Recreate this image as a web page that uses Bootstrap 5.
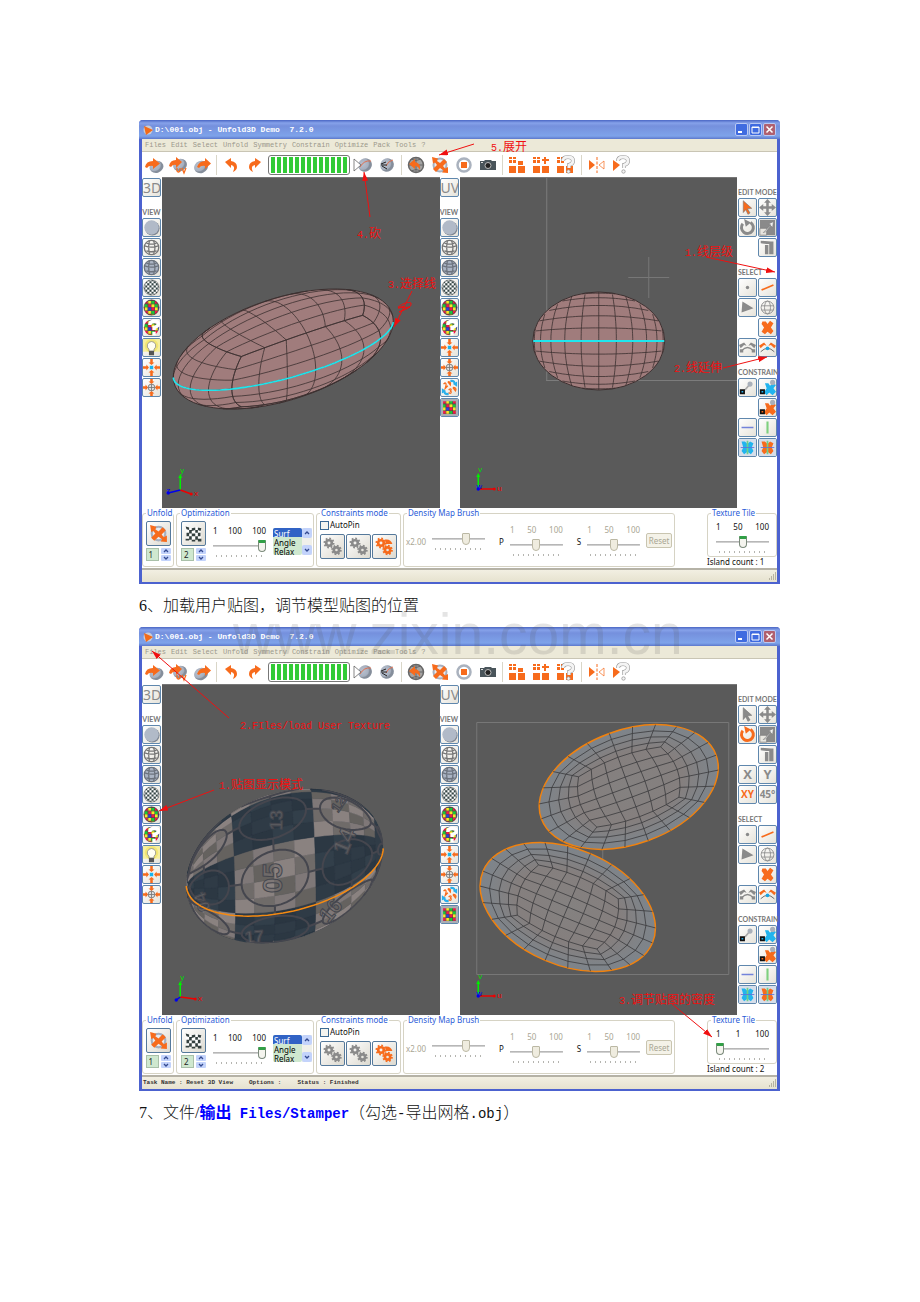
<!DOCTYPE html>
<html lang="zh-CN">
<head>
<meta charset="utf-8">
<meta name="viewport" content="width=device-width, initial-scale=1">
<title>Unfold3D 教程</title>
<link href="https://cdn.jsdelivr.net/npm/bootstrap@5.3.0/dist/css/bootstrap.min.css" rel="stylesheet">
<style>
  :root { --hot:#f76b1c; --mute:#8a8a8a; --face:#ece9d8; --frame:#4c62cf; }
  body { background:#fff; color:#111; font-family:"Noto Sans", sans-serif; }
  .doc-page { padding:120px 140px 170px 139px; }
  .doc-line { font:300 16px/44px "Liberation Serif", "Noto Sans CJK SC", sans-serif; height:43px; margin:0; white-space:nowrap; }
  .latin { font-family:"Liberation Mono", monospace; font-size:14px; line-height:16px; }
  .doc-line a { color:#00f; font-weight:700; text-decoration:none; }
  .watermark { position:absolute; z-index:5; left:94px; top:17px; font:400 57px/66px "Liberation Sans", sans-serif; color:rgba(90,90,90,.16); pointer-events:none; }

  .app-window { border:solid var(--frame); border-width:0 3px 2px; border-radius:4px 4px 0 0; background:#fff; font-size:8px; line-height:10px; color:#111; }
  .title-bar { height:19px; margin:0 -3px; padding:0 4px 0 4px; gap:2px; border-radius:4px 4px 0 0; color:#fff;
    background:linear-gradient(#4a66c4 0,#86a2ea 3px,#7590dd 6px,#7ea3ea 16px,#5c78cc 19px); font:700 8px/19px "Liberation Mono", monospace; white-space:pre; }
  .win-btn { width:13px; height:13px; border:1px solid #b9c9f4; border-radius:2px; background:#3f6be0; }
  .win-btn.is-close { background:#b0606f; }
  .win-btn svg, .tool-btn svg, .bar-btn svg, .big-btn svg { display:block; width:100%; height:100%; }
  .menu-row { height:13px; padding-left:3px; gap:5px; background:var(--face); border-bottom:1px solid #c9c5b4; font:400 7px/12px "Liberation Mono", monospace; }
  .menu-row a { color:#9b988b; text-decoration:none; }
  .tool-row { height:25px; }
  .bar-btn { width:24px; height:22px; padding:1px 2px; border:0; background:none; color:var(--hot); }
  .bar-sep { width:1px; height:20px; margin:0 2px; background:#d9d6c8; }
  .bar-sep.wide { margin:0 3px 0 4px; }
  .cut-meter { width:82px; height:20px; margin:0 1px; padding:1px; border:1px solid #777; border-radius:3px; background:#fff; }
  .cut-meter .progress-bar { background:repeating-linear-gradient(90deg,#fff 0,#fff 1px,#2ecc34 1px,#35c938 5px,#fff 5px,#fff 6px); }

  .work-area { height:331px; }
  .side-tools { width:20px; gap:1px; padding:1px 1px 0 0; }
  .edit-tools { width:40px; gap:1px; padding:1px 0 0 1px; display:grid; grid-template-columns:19px 19px; grid-auto-rows:19px; }
  .edit-tools .group-name { grid-column:1 / 3; }
  .edit-tools .second { grid-column:2; }
  .group-name { height:19px; padding-top:9px; font:700 7px/10px Lato, sans-serif; color:#777; white-space:nowrap; }
  .tool-btn { width:19px; height:19px; padding:0; border:1px solid #5f87ad; border-radius:2px; color:var(--mute);
    background:linear-gradient(135deg,#fff,#e6e3da); font:700 13px/17px "Open Sans", sans-serif; overflow:hidden; text-align:center; display:block; flex:none; }
  .tool-btn.thin-text { font:400 14px/17px "Noto Sans", sans-serif; }
  .tool-btn.small-text { font-size:10px; }
  .viewport { flex:1 1 0; min-width:0; background:#5a5a5a; overflow:hidden; border-top:1px solid #777; }
  .viewport svg { display:block; width:100%; height:330px; }

  .panel-row { height:60px; gap:2px; white-space:nowrap; }
  .group-box { height:59px; border:1px solid #d6d3c4; border-radius:3px; flex:none; }
  .group-box > legend { float:none; width:auto; margin:0 0 0 3px; padding:0 1px; font-size:8px; line-height:10px; color:#2a5bd7; }
  .w-unfold { width:32px; } .w-optim { width:138px; } .w-cons { width:85px; } .w-density { width:272px; } .w-tile { width:70px; }
  .w-tile .group-box { height:49px; }
  .big-btn { width:25px; height:25px; padding:1px; border:1px solid #55799b; border-radius:2px; background:linear-gradient(135deg,#fff,#dcd9cf); color:var(--mute); }
  .tool-btn.hot, .big-btn.hot { color:var(--hot); }
  .tool-btn.cold { color:#22b4ee; }
  .spin-row { gap:2px; }
  .spin-input { width:13px; height:13px; padding:0 0 0 2px; border:1px solid #a9c0a9; background:#cfe8cf; font-size:8px; line-height:11px; color:#222; }
  .spin-btns { gap:1px; }
  .spin-btns button { width:10px; height:6px; padding:0; border:0; border-radius:1px; background:#c3d3fb; display:block; }
  .spin-btns svg { display:block; width:10px; height:6px; }
  .scale-box { width:53px; }
  .scale-nums { height:10px; }
  .scale-box input { appearance:none; -webkit-appearance:none; display:block; width:100%; height:12px; margin:4px 0 0; background:linear-gradient(#aaa,#ddd) center/100% 2px no-repeat; }
  .scale-box input::-webkit-slider-thumb { appearance:none; -webkit-appearance:none; width:8px; height:12px; border:1px solid #7b8a7b; border-top:3px solid #31a046; border-radius:1px 1px 4px 4px; background:#f4f4ee; }
  .scale-box input:disabled::-webkit-slider-thumb { border:1px solid #bbb8a4; background:#efecdf; }
  .scale-box .ticks { height:2px; margin:3px 2px 0 3px; background:repeating-linear-gradient(90deg,#b5b5b0 0,#b5b5b0 1px,transparent 1px,transparent 5px); }
  .dim { color:#a9a694; }
  .optim-row { gap:7px; }
  .stack { gap:2px; padding-top:3px; }
  .density-row { gap:6px; padding:7px 2px 0; }
  .density-row > .beside { margin-top:12px; }
  .mode-box { padding-top:10px; }
  .mode-list { width:29px; height:27px; padding:0; border:0; background:#cfe8cf; font:400 8px/9px "Noto Sans", sans-serif; overflow:hidden; }
  .mode-list option { padding:0 1px; height:9px; min-height:0; line-height:9px; }
  .mode-list option:checked { background:linear-gradient(#3163c5,#3163c5); -webkit-text-fill-color:#fff; }
  .list-scroll { width:10px; background:#f0f0ea; }
  .list-scroll button { width:10px; height:10px; padding:0; border:0; border-radius:2px; background:#c3d3fb; }
  .list-scroll svg { display:block; width:10px; height:10px; }
  .pin-check { width:9px; height:9px; margin:0 1px 0 0; border:1px solid #3c6a94; border-radius:0; appearance:none; -webkit-appearance:none; background:#f5f5f0; }
  .pin-row { padding:2px 0 0 3px; }
  .reset-btn { width:26px; height:15px; padding:0; border:1px solid #c9c5b0; border-radius:2px; background:#f4f2e8; color:#a9a694; font-size:8px; line-height:12px; }
  .status-row { height:14px; border-top:2px solid #b5b2a6; background:linear-gradient(#f2efe2,#e6e2cf); font:700 6px/12px "Liberation Mono", monospace; color:#333; padding-left:1px; gap:16px; }
  .notes { position:absolute; left:-3px; top:0; width:calc(100% + 6px); height:calc(100% + 2px); pointer-events:none; overflow:visible; z-index:2; }
  .notes text { fill:#f01010; font:400 12px "Liberation Mono", "Noto Sans CJK SC", sans-serif; }
  .notes .num { font-size:10px; }
  .notes path { stroke:#f01010; stroke-width:1; fill:none; }
  .paint-box { position:absolute; width:0; height:0; }
</style>
</head>
<body>
<svg class="paint-box" aria-hidden="true">
  <defs>
    <radialGradient id="steel" cx=".4" cy=".35"><stop offset="0" stop-color="#b9c1cf"/><stop offset=".8" stop-color="#a7b0bf"/><stop offset="1" stop-color="#858e9b"/></radialGradient>
    <radialGradient id="clay"><stop offset="0" stop-color="#848180"/><stop offset=".6" stop-color="#857f7e"/><stop offset=".85" stop-color="#808387"/><stop offset="1" stop-color="#7d848b"/></radialGradient>
    <pattern id="chk" width="5" height="5" patternUnits="userSpaceOnUse"><path fill="#fff" d="M0 0h5v5H0z"/><path fill="#344" d="M0 0h2.500v2.500H0zM2.500 2.500H5V5H2.500z"/></pattern>
    <pattern id="rgb" width="12" height="12" patternUnits="userSpaceOnUse" x="2" y="2"><path fill="#334" d="M0 0h12v12H0z"/><path fill="#f0174b" d="M0 0h3.500v3.500H0zM4 4h3.500v3.500H4zM8 8h3.500v3.500H8z"/><path fill="#fbea25" d="M4 0h3.500v3.500H4zM8 4h3.500v3.500H8zM0 8h3.500v3.500H0z"/><path fill="#18c838" d="M8 0h3.500v3.500H8zM0 4h3.500v3.500H0z"/><path fill="#2840e0" d="M4 8h3.500v3.500H4z"/></pattern>
    <marker id="tip" viewBox="0 0 9 6" refX="9" refY="3" markerWidth="9" markerHeight="6" markerUnits="userSpaceOnUse" orient="auto"><path d="M0 0L9 3L0 6z" fill="#f01010"/></marker>
  </defs>
  <symbol id="i-load" viewBox="0 0 20 20"><ellipse cx="12.500" cy="12" rx="7" ry="6" fill="url(#steel)" transform="rotate(-20 12 12)"/><path d="M1 12Q2 6 9 6V3l7 5.500L9 14v-3Q5 10 3 13z" fill="currentColor"/></symbol>
  <symbol id="i-loaduv" viewBox="0 0 20 20"><ellipse cx="12" cy="10" rx="7" ry="6" fill="url(#steel)" transform="rotate(-20 12 10)"/><path d="M1 11Q2 5 8 5V2l6 5-6 6v-3Q5 9 3 12z" fill="currentColor"/><path d="M9 13v3q1 2 3 0v-3M14 13l2 5 2-5" fill="none" stroke="currentColor" stroke-width="1.3"/></symbol>
  <symbol id="i-save" viewBox="0 0 20 20"><ellipse cx="9" cy="12" rx="7" ry="6" fill="url(#steel)" transform="rotate(-20 9 12)"/><path d="M5 12Q7 6 13 6V3l6 5.500-6 5.500v-3Q9 10 7 13z" fill="currentColor"/></symbol>
  <symbol id="i-undo" viewBox="0 0 20 20"><path d="M4 7l6-4v3q6 1 6 6 0 3-4 5 3-6-2-7v3z" fill="currentColor"/></symbol>
  <symbol id="i-redo" viewBox="0 0 20 20"><path d="M16 7l-6-4v3q-6 1-6 6 0 3 4 5-3-6 2-7v3z" fill="currentColor"/></symbol>
  <symbol id="i-cut" viewBox="0 0 20 20"><ellipse cx="12" cy="10" rx="7" ry="6.500" fill="url(#steel)" transform="rotate(-30 12 10)"/><path d="M7 12Q11 5 18 6" stroke="#e07050" fill="none"/><path d="M1 4l7 6-7 6z" fill="#fff" stroke="#555" stroke-width=".7"/></symbol>
  <symbol id="i-join" viewBox="0 0 20 20"><ellipse cx="10" cy="10" rx="7" ry="6.500" fill="url(#steel)" transform="rotate(-30 10 10)"/><path d="M9 11Q11 6 16 5" stroke="#e07050" fill="none"/><path d="M4 9l5-2M4 10h6M5 11l5 3" stroke="#222" fill="none"/></symbol>
  <symbol id="i-globeback" viewBox="0 0 20 20"><circle cx="10" cy="10" r="7.500" fill="#a4a4a4" stroke="#666" stroke-width="1.500"/><path d="M10 2v16M2 10h16M5 4q5 3 10 0M5 16q5-3 10 0" stroke="#666" fill="none"/><path d="M3 9l6-5v3q6 1 5 8-2-4-5-4v3z" fill="currentColor"/></symbol>
  <symbol id="i-unfold" viewBox="0 0 20 20"><circle cx="10" cy="10" r="6.500" fill="#e8eaee" stroke="#a7b0bf" stroke-width="2"/><path d="M2 2l6 1.500L7 6l3 2 4-4 3 3-4 4 2 2.500L18 12v6l-6-.5 1.500-2L10 13l-4 4-3-3 4-4-2-2.500-2 1z" fill="currentColor"/></symbol>
  <symbol id="i-record" viewBox="0 0 20 20"><circle cx="10" cy="10" r="6.500" fill="#fff" stroke="#aab2be" stroke-width="2.500"/><path d="M7 7h6v6H7z" fill="currentColor"/></symbol>
  <symbol id="i-camera" viewBox="0 0 20 20"><path d="M2 6h4l1-1h6l1 1h4v9H2z" fill="#4a555b"/><circle cx="10" cy="10.500" r="3" fill="#222" stroke="#bbb"/><path d="M3 7h2v1H3z" fill="#ddd"/></symbol>
  <symbol id="i-pack" viewBox="0 0 20 20"><path d="M2 2h3v2H2zM6 2h3v2H6zM2 5h3v3H2zM6 5h3v3H6zM11 6h5v4h-5zM2 11h7v7H2zM11 11h7v7h-7z" fill="currentColor"/></symbol>
  <symbol id="i-packadd" viewBox="0 0 20 20"><path d="M2 2h3v2H2zM6 2h3v2H6zM2 5h3v3H2zM6 5h3v3H6zM13 2h2v2h3v2h-3v3h-2V6h-2V4h2zM2 11h7v7H2zM11 11h7v7h-7z" fill="currentColor"/></symbol>
  <symbol id="i-packask" viewBox="0 0 20 20"><path d="M2 2h3v2H2zM6 2h3v2H6zM2 5h3v3H2zM6 5h3v3H6zM2 11h7v7H2zM11 11h7v7h-7z" fill="currentColor"/><path d="M8 6q0-4 5-4 5 0 5 4 0 3-4 4v3" stroke="#999" stroke-width="4" fill="none"/><path d="M8 6q0-4 5-4 5 0 5 4 0 3-4 4v3" stroke="#f4f4f4" stroke-width="2.800" fill="none"/><circle cx="13.500" cy="16.500" r="1.700" fill="#f4f4f4" stroke="#999" stroke-width=".8"/></symbol>
  <symbol id="i-mirror" viewBox="0 0 20 20"><path d="M2 5l6 5-6 5z" fill="currentColor"/><path d="M10 2v16" stroke="currentColor" stroke-dasharray="3 1.500"/><path d="M17 6l-5 4 5 4z" fill="none" stroke="currentColor" stroke-width=".7"/></symbol>
  <symbol id="i-mirrorask" viewBox="0 0 20 20"><path d="M2 5l7 5-7 6z" fill="currentColor"/><path d="M7 6q0-4 5-4 5 0 5 4 0 3-4 4v3" stroke="#999" stroke-width="4" fill="none"/><path d="M7 6q0-4 5-4 5 0 5 4 0 3-4 4v3" stroke="#f4f4f4" stroke-width="2.800" fill="none"/><circle cx="12.500" cy="16.500" r="1.700" fill="#f4f4f4" stroke="#999" stroke-width=".8"/></symbol>

  <symbol id="i-ball" viewBox="0 0 20 20"><circle cx="11" cy="11" r="8.500" fill="#7d8591"/><circle cx="10" cy="10" r="8.500" fill="#b1bac8"/></symbol>
  <symbol id="i-wire" viewBox="0 0 20 20"><g fill="none" stroke="#777" stroke-width="1.500"><circle cx="10" cy="10" r="8.500"/><path d="M7.500 2q-2 8 0 16M12.500 2q3 8 0 16M2 8q8 3 16 0M4 14q6 2 12 0M4 5q6 2 12 0"/></g></symbol>
  <symbol id="i-ballwire" viewBox="0 0 20 20"><circle cx="10" cy="10" r="8.500" fill="#aab4c4"/><g fill="none" stroke="#6c737e" stroke-width="1.500"><circle cx="10" cy="10" r="8.500"/><path d="M7.500 2q-2 8 0 16M12.500 2q3 8 0 16M2 8q8 3 16 0M4 14q6 2 12 0M4 5q6 2 12 0"/></g></symbol>
  <symbol id="i-checker" viewBox="0 0 20 20"><circle cx="10" cy="10" r="9" fill="url(#chk)" stroke="#555" stroke-width=".6"/></symbol>
  <symbol id="i-color" viewBox="0 0 20 20"><circle cx="10" cy="10" r="9" fill="url(#rgb)" stroke="#222" stroke-width=".6"/></symbol>
  <symbol id="i-colorask" viewBox="0 0 20 20"><circle cx="10" cy="10" r="9" fill="url(#rgb)"/><path d="M8 7q0-4 5-4 5 0 5 3 0 3-5 4v3M13 15v4" stroke="#fff" stroke-width="4" fill="none"/></symbol>
  <symbol id="i-bulb" viewBox="0 0 20 20"><path d="M0 0h20v15H0z" fill="#f6efa0"/><circle cx="10" cy="8" r="8" fill="#f2e674"/><path d="M10 3a5 5 0 0 1 3 9v2H7v-2a5 5 0 0 1 3-9z" fill="#fffef0" stroke="#777" stroke-width=".8"/><path d="M7 14h6v5H7z" fill="#555"/></symbol>
  <symbol id="i-center" viewBox="0 0 20 20"><path d="M10 7L6.500 4h2V0h3v4h2zM10 13l3.500 3h-2v4h-3v-4h-2zM7 10l-3 3.500v-2H0v-3h4v-2zM13 10l3-3.500v2h4v3h-4v2z" fill="#f76b1c"/><path d="M8 8h4v4H8z" fill="#18b4ec"/></symbol>
  <symbol id="i-centerball" viewBox="0 0 20 20"><path d="M10 6L6.500 3h2V0h3v3h2zM10 14l3.500 3h-2v3h-3v-3h-2zM6 10l-3 3.500v-2H0v-3h3v-2zM14 10l3-3.500v2h3v3h-3v2z" fill="#f76b1c"/><circle cx="10" cy="10" r="4" fill="#ddd" stroke="#777"/><path d="M10 6v8M6 10h8" stroke="#777"/></symbol>
  <symbol id="i-swap" viewBox="0 0 20 20"><path d="M11 1q5-1 6 3l2-1v6l-5-3 1-1q-1-2-4-1zM9 19q-5 1-6-3l-2 1v-6l5 3-1 1q1 2 4 1z" fill="#28b0ec"/><path d="M3 6q3-3 3 1l-1 4 3-3M8 3l3 4q1-4-3-4M9 13q3-3 3 0-2 1 0 2 0 3-3 1M14 10l3 4q2-4-3-4" stroke="#f76b1c" stroke-width="1.500" fill="none"/></symbol>
  <symbol id="i-grid" viewBox="0 0 20 20"><path d="M0 0h20v20H0z" fill="#a9adb3"/><path d="M2.500 2.500h15v15h-15z" fill="url(#rgb)"/></symbol>

  <symbol id="i-arrow" viewBox="0 0 20 20"><path d="M5 2l10 9-5 .5 3 5-2.500 1.500-2.500-5.500L5 16z" fill="currentColor" stroke="#777" stroke-width=".7"/></symbol>
  <symbol id="i-move" viewBox="0 0 20 20"><path d="M10 0l4 4.500h-2.500v4H15V6l5 4-5 4v-2.500h-3.500v4H14L10 20l-4-4.500h2.500v-4H5V14l-5-4 5-4v2.500h3.500v-4H6z" fill="currentColor"/></symbol>
  <symbol id="i-rotate" viewBox="0 0 20 20"><path d="M4.500 5.500A7 7 0 1 0 13.500 4" fill="none" stroke="currentColor" stroke-width="3.500"/><path d="M6 0l8 4-6 5z" fill="currentColor"/></symbol>
  <symbol id="i-scale" viewBox="0 0 20 20"><path d="M1 1h18v18H1z" fill="currentColor"/><path d="M1 11h8v8H1z" fill="#e8e6e0" stroke="#777" stroke-width=".8"/><path d="M5 16l9-9-3-1 6-3-1 7-2-2-6 7z" fill="#f3f3f3" stroke="#777" stroke-width=".7"/></symbol>
  <symbol id="i-fix" viewBox="0 0 20 20"><path d="M2 2l12 1v3H9L2 5zM7 7h4v11H7zM12 3h5v15h-5z" fill="currentColor"/></symbol>
  <symbol id="i-dot" viewBox="0 0 20 20"><circle cx="10" cy="10" r="2" fill="currentColor"/></symbol>
  <symbol id="i-edge" viewBox="0 0 20 20"><path d="M3 13L17 7" stroke="currentColor" stroke-width="2"/></symbol>
  <symbol id="i-face" viewBox="0 0 20 20"><path d="M4 3l13 8-14 5z" fill="currentColor"/></symbol>
  <symbol id="i-island" viewBox="0 0 20 20"><g fill="none" stroke="currentColor"><circle cx="10" cy="10" r="7.500"/><ellipse cx="10" cy="10" rx="3.500" ry="7.500"/><path d="M3 8h14M3 13h14"/></g></symbol>
  <symbol id="i-cross" viewBox="0 0 20 20"><path d="M4 3h4l2 3 3-4 4 3-3 5 3 4-3 4-4-3-3 3-4-3 3-5-3-4z" fill="currentColor"/></symbol>
  <symbol id="i-link" viewBox="0 0 20 20"><path d="M3 14Q10 6 17 14" fill="none" stroke="currentColor" stroke-width="1.500"/><path d="M0 7l6-3 3 4-3-1-4 4zM20 7l-6-3-3 4 3-1 4 4zM1 12h4v4H1zM15 12h4v4h-4z" fill="currentColor"/></symbol>
  <symbol id="i-path" viewBox="0 0 20 20"><path d="M0 8l6-4 3 4-3-1-4 4zM20 8l-6-4-3 4 3-1 4 4z" fill="#f76b1c"/><path d="M2 15Q10 7 18 15" stroke="#555" fill="none"/><circle cx="10" cy="11" r="2.200" fill="#18a4e4"/></symbol>
  <symbol id="i-pin" viewBox="0 0 20 20"><path d="M7 13l5-6" stroke="#aaa" stroke-width="2"/><circle cx="13" cy="6" r="3" fill="#a9b0ba"/><path d="M1 12h6v6H1z" fill="#111"/><path d="M3 14h2v2H3z" fill="#28b0ec"/></symbol>
  <symbol id="i-pinx" viewBox="0 0 20 20"><path d="M7 5h4l2 3 3-3 4 2-3 4 3 4-4 4-4-3-3 3-3-3 3-5z" fill="currentColor"/><circle cx="16" cy="4" r="3" fill="#a9b0ba"/><path d="M1 12h6v6H1z" fill="#111"/><path d="M3 14h2v2H3z" fill="currentColor"/></symbol>
  <symbol id="i-hline" viewBox="0 0 20 20"><path d="M3 10h14" stroke="#7383da" stroke-width="2"/></symbol>
  <symbol id="i-vline" viewBox="0 0 20 20"><path d="M10 3v14" stroke="#7fd07f" stroke-width="2.500"/></symbol>
  <symbol id="i-axes" viewBox="0 0 20 20"><path d="M0 0h20v20H0z" fill="#d6deea"/><path d="M3 3h4l3 3 3-3 4 2-2 5 2 4-3 4-4-3-4 3-3-4 2-4z" fill="currentColor"/><path d="M10 2v16" stroke="#6fd08a" stroke-width="2"/><path d="M2 10h16" stroke="#5d72d8"/></symbol>
  <symbol id="i-gears" viewBox="0 0 24 24"><g fill="none" stroke="currentColor"><circle cx="8" cy="8" r="3.200" stroke-width="3"/><circle cx="8" cy="8" r="5.300" stroke-width="2" stroke-dasharray="2 2.100"/><circle cx="16.500" cy="16" r="3" stroke-width="3"/><circle cx="16.500" cy="16" r="5" stroke-width="2" stroke-dasharray="2 1.900"/></g></symbol>
  <symbol id="i-gearsplus" viewBox="0 0 24 24"><g fill="none" stroke="currentColor"><circle cx="8" cy="8" r="3.200" stroke-width="3"/><circle cx="8" cy="8" r="5.300" stroke-width="2" stroke-dasharray="2 2.100"/><circle cx="15.500" cy="16" r="3" stroke-width="3"/><circle cx="15.500" cy="16" r="5" stroke-width="2" stroke-dasharray="2 1.900"/></g><path d="M13 4q6-1 8 5l-8 0z" fill="currentColor"/></symbol>
  <symbol id="i-flag" viewBox="0 0 24 24"><path d="M3 4q5 3 9 1t9 1l-1 4 1 4-1 6q-5-3-9-1t-8-1l2-4-2-4z" fill="#fff"/><path d="M3 4l4 1v3l-3-1zM10 6l4-1v3l-4 1zM17 5l4 1-1 3-3-1zM7 8h3v4H7zM14 8h3v3h-3zM4 11h3v4H4zM10 12h4v3h-4zM17 11h3v4h-3zM7 15h3v4H7zM14 15h3v4h-3zM3 18h4v2H3zM10 19h4v2h-4zM17 18h4v3h-4z" fill="#34403f"/></symbol>
  <symbol id="i-up" viewBox="0 0 10 6"><path d="M3 4l2-2 2 2" fill="none" stroke="#334a90" stroke-width="1.300"/></symbol>
  <symbol id="i-down" viewBox="0 0 10 6"><path d="M3 2l2 2 2-2" fill="none" stroke="#334a90" stroke-width="1.300"/></symbol>
</svg>

<main class="doc-page">
  <section id="win-cut" class="app-window position-relative" aria-label="Unfold3D, cutting"></section>
  <p class="doc-line position-relative">6、加载用户贴图，调节模型贴图的位置<span class="watermark" aria-hidden="true">www.zixin.com.cn</span></p>
  <section id="win-map" class="app-window position-relative" aria-label="Unfold3D, texture"></section>
  <p class="doc-line">7、文件/<a href="#win-map">输出<span class="latin"> Files/Stamper</span></a>（勾选<span class="latin">-</span>导出网格<span class="latin">.obj</span>）</p>
</main>

<script>
/* ---------- geometry helpers ---------- */
const RAD = Math.PI / 180;
const unit = v => { const l = Math.hypot(...v); return v.map(c => c / l); };
const cross = (a, b) => [a[1]*b[2]-a[2]*b[1], a[2]*b[0]-a[0]*b[2], a[0]*b[1]-a[1]*b[0]];
const dot = (a, b) => a[0]*b[0] + a[1]*b[1] + a[2]*b[2];
const r1 = n => Math.round(n * 10) / 10;

/* An ellipsoid seen in parallel projection: c is its centre, u v w the images of its three axes. */
function ellipsoid(c, u, v, w) {
  const X = [u[0], v[0], w[0]], Y = [u[1], v[1], w[1]];
  let n = unit(cross(X, Y));
  if (n[1] < 0) n = n.map(k => -k);
  const at = s => [r1(c[0] + dot(X, s)), r1(c[1] + dot(Y, s))];
  const e1 = unit(cross(n, Math.abs(n[0]) > .9 ? [0,0,1] : [1,0,0])), e2 = cross(n, e1);
  const rim = 'M' + Array.from({length:72}, (_, i) => at(e1.map((k, j) => k*Math.cos(i*5*RAD) + e2[j]*Math.sin(i*5*RAD)))).join('L') + 'Z';
  const line = pts => {
    let d = '', pen = false;
    for (const s of pts) { if (dot(s, n) >= -.01) { d += (pen ? 'L' : 'M') + at(s); pen = true; } else pen = false; }
    return d;
  };
  return { at, n, rim, line };
}
const equator = Array.from({length:121}, (_, i) => [Math.cos((i*3-90)*RAD), Math.sin((i*3-90)*RAD), 0]);

/* Lines of a cube subdivided 6 times per side and blown up to a sphere, turned by `turn` degrees about its pole. */
function cubeLines(turn) {
  const out = [], c = Math.cos(turn*RAD), s = Math.sin(turn*RAD);
  const spin = p => [p[0]*c - p[1]*s, p[0]*s + p[1]*c, p[2]];
  const faces = [(a,b)=>[1,a,b],(a,b)=>[-1,a,b],(a,b)=>[a,1,b],(a,b)=>[a,-1,b],(a,b)=>[a,b,1],(a,b)=>[a,b,-1]];
  for (const f of faces) for (let i = -3; i <= 3; i++) {
    const k = Math.tan(i*15*RAD), g = [], h = [];
    for (let t = -45; t <= 45; t += 5) { const m = Math.tan(t*RAD); g.push(spin(unit(f(k, m)))); h.push(spin(unit(f(m, k)))); }
    out.push(g, h);
  }
  return out;
}
function meshBody(e, turn) {
  return `<path d="${e.rim}" fill="#a07c7c" stroke="#3b3030"/>
    <path d="${cubeLines(turn).map(e.line).join('')}" fill="none" stroke="#3b3030" stroke-width=".8"/>`;
}
/* The same body seen end on: two families of bowed lines. */
function endOnBody(cx, cy, rx, ry) {
  let d = '';
  for (let i = -5; i <= 5; i++) {
    const k = Math.sin(i*15.5*RAD), v = [], h = [];
    for (let t = -20; t <= 20; t++) {
      const m = t/20, q = k*(1 - .25*m*m);
      if (Math.hypot(q, m) <= 1) { v.push([r1(cx + rx*q), r1(cy + ry*m)]); h.push([r1(cx + rx*m), r1(cy + ry*q)]); }
    }
    d += 'M' + v.join('L') + 'M' + h.join('L');
  }
  return `<ellipse cx="${cx}" cy="${cy}" rx="${rx}" ry="${ry}" fill="#a07c7c" stroke="#3b3030"/><path d="${d}" fill="none" stroke="#3b3030" stroke-width=".8"/>`;
}

/* Body wearing the numbered checker texture. */
function texturedBody(e) {
  const P = (a, b) => [Math.sin(a*RAD), Math.cos(a*RAD)*Math.cos(b*RAD), Math.cos(a*RAD)*Math.sin(b*RAD)];
  const light = ['#8a8280','#6f6b69','#7f7878','#65625f'], dark = ['#2f3b46','#2a3641','#323f4a','#2c3843'];
  let s = `<path d="${e.rim}" fill="#303c47"/>`;
  const w = 12.125, h = 13.5;
  for (let i = -8; i < 8; i++) for (let j = -8; j < 12; j++) {
    const a0 = Math.max(-90, -32 + i*w), a1 = Math.min(90, -32 + (i+1)*w), b0 = 3 + j*h, b1 = b0 + h;
    if (a1 <= a0 || dot(P((a0+a1)/2, (b0+b1)/2), e.n) < -.15) continue;
    const isLight = (Math.floor(i/4) + Math.floor(j/4)) % 2 === 0;
    const tone = (isLight ? light : dark)[((i + j) & 1) + 2 * (((i >> 1) + (j >> 1)) & 1)];
    const pts = [P(a0,b0),P((a0+a1)/2,b0),P(a1,b0),P(a1,(b0+b1)/2),P(a1,b1),P((a0+a1)/2,b1),P(a0,b1),P(a0,(b0+b1)/2)].map(e.at);
    s += `<path d="M${pts.join('L')}Z" fill="${tone}" stroke="${tone}" stroke-width=".4"/>`;
  }
  let rings = '';
  for (let i = -1; i < 3; i++) for (let j = -1; j < 3; j++) {
    const ca = -7.75 + (i)*48.5, cb = 30 + j*54;
    rings += e.line(Array.from({length:37}, (_, k) => P(ca + 20*Math.cos(k*10*RAD), cb + 22*Math.sin(k*10*RAD))));
    rings += e.line([20,24,28].map(k => P(ca+k, cb))) + e.line([20,24,28].map(k => P(ca-k, cb)));
    rings += e.line([22,27,32].map(k => P(ca, cb+k))) + e.line([22,27,32].map(k => P(ca, cb-k)));
  }
  const nums = [['05',111,193,-90,27],['13',114,135,-88,18],['14',182,156,-68,23],['16',168,225,-50,21],['04',40,217,-110,17],['12',176,119,-55,14],['17',92,252,-5,17]]
    .map(([t,x,y,r,f]) => `<text transform="translate(${x} ${y}) rotate(${r})" text-anchor="middle" dominant-baseline="central" font-family="Liberation Sans" font-weight="700" font-size="${f}" fill="#777170" fill-opacity=".6" stroke="#44464e" stroke-width="1">${t}</text>`).join('');
  return `<clipPath id="bodyClip"><path d="${e.rim}"/></clipPath><g clip-path="url(#bodyClip)">${s}<path d="${rings}" fill="none" stroke="#45464e" stroke-width="2"/>${nums}</g>
    <path d="${e.line(equator)}" fill="none" stroke="#f58a12" stroke-width="1.500"/>`;
}

/* Flattened half of the mesh: a 6 x 6 core and four rings out to the border. */
function uvIsland(cx, cy, A, B, tilt) {
  const c = Math.cos(tilt*RAD), s = Math.sin(tilt*RAD);
  const at = (x, y) => [r1(cx + A*x*c - B*y*s), r1(cy + A*x*s + B*y*c)];
  const core = (p, q) => [.47*p*(1 + .18*(1-q*q)), .47*q*(1 + .18*(1-p*p))];
  const ks = [-3,-2,-1,0,1,2,3].map(k => k/3);
  let d = '';
  for (const k of ks) { d += 'M' + ks.map(t => at(...core(k, t))).join('L'); d += 'M' + ks.map(t => at(...core(t, k))).join('L'); }
  const border = [];
  for (let side = 0; side < 4; side++) for (let k = 0; k < 6; k++) {
    const q = -1 + k/3, t = side*90*RAD, [x, y] = core(1, q), ang = q*45*RAD;
    const turn = (a, b) => [a*Math.cos(t) - b*Math.sin(t), a*Math.sin(t) + b*Math.cos(t)];
    border.push([turn(x, y), turn(Math.cos(ang), Math.sin(ang))]);
  }
  for (const f of [.25,.5,.75]) d += 'M' + border.map(([a, b]) => at(a[0]+(b[0]-a[0])*f, a[1]+(b[1]-a[1])*f)).join('L') + 'Z';
  for (const [a, b] of border) d += `M${at(...a)}L${at(...b)}`;
  return `<g transform="rotate(${tilt} ${cx} ${cy})"><ellipse cx="${cx}" cy="${cy}" rx="${A}" ry="${B}" fill="url(#clay)" stroke="#f0820f" stroke-width="1.500"/></g><path d="${d}" fill="none" stroke="#3a3a3c" stroke-width=".8"/>`;
}
const gizmo = (x, y, rx, ry, bx, by, names) => `<g stroke-width="1.500" fill="none"><path d="M${x} ${y}v-14" stroke="#0e0"/><path d="M${x} ${y}L${rx} ${ry}" stroke="#e00"/><path d="M${x} ${y}L${bx} ${by}" stroke="#00e"/></g>
  <path d="M${x-2} ${y-12}l2-4 2 4z" fill="#0e0"/><circle cx="${rx}" cy="${ry}" r="1.500" fill="#e00"/><circle cx="${bx}" cy="${by}" r="1.700" fill="#00e"/>
  <g font-family="Liberation Sans" font-size="8"><text x="${x}" y="${y-17}" fill="#0d0">${names[0]}</text><text x="${rx+3}" y="${ry+2}" fill="#e00">${names[1]}</text><text x="${bx-2}" y="${by}" fill="#00e">${names[2]}</text></g>`;

/* ---------- interface pieces ---------- */
const icon = id => `<svg aria-hidden="true"><use href="#i-${id}"/></svg>`;
const tool = (id, cls = '') => `<button type="button" class="tool-btn ${cls}" aria-label="${id}">${icon(id)}</button>`;
const bar = id => `<button type="button" class="bar-btn" aria-label="${id}">${icon(id)}</button>`;
const sep = '<span class="bar-sep"></span>';
const scale = (name, nums, value, off) => `<label class="scale-box ${off ? 'dim' : ''}">${nums ? `<span class="scale-nums d-flex justify-content-between">${nums.map(n => `<span>${n}</span>`).join('')}</span>` : ''}<input type="range" min="0" max="100" value="${value}" aria-label="${name}" ${off ? 'disabled' : ''}><span class="ticks d-block"></span></label>`;
const spin = (name, v) => `<div class="spin-row d-flex align-items-center"><input class="spin-input" type="text" value="${v}" aria-label="${name}"><div class="spin-btns d-flex flex-column"><button type="button" aria-label="more">${icon('up')}</button><button type="button" aria-label="less">${icon('down')}</button></div></div>`;
const sideTools = (head, ids) => `<div class="side-tools d-flex flex-column align-items-center flex-shrink-0"><button type="button" class="tool-btn thin-text">${head}</button><div class="group-name">VIEW</div>${ids.map(i => tool(i)).join('')}</div>`;
const shared = ['ball','wire','ballwire','checker','color','colorask'];

function appWindow(o) {
  return `
  <header class="title-bar d-flex align-items-center">
    <svg width="10" height="12" viewBox="0 0 10 12" aria-hidden="true"><circle cx="5" cy="6" r="4.500" fill="#c9ccd6"/><path d="M1 2l9 4-7 5z" fill="#f36a18"/></svg>
    <span class="me-auto">D:\\001.obj - Unfold3D Demo  7.2.0</span>
    <div class="d-flex" style="gap:1px">
      <button type="button" class="win-btn p-0" aria-label="Minimize"><svg viewBox="0 0 11 11"><path d="M2 8h4" stroke="#fff" stroke-width="2"/></svg></button>
      <button type="button" class="win-btn p-0" aria-label="Maximize"><svg viewBox="0 0 11 11"><path d="M2 3h7v6H2zM2 3.500h7" stroke="#fff" fill="none"/></svg></button>
      <button type="button" class="win-btn is-close p-0" aria-label="Close"><svg viewBox="0 0 11 11"><path d="M2.500 2.500l6 6M8.500 2.500l-6 6" stroke="#fff" stroke-width="1.500"/></svg></button>
    </div>
  </header>
  <nav class="menu-row d-flex">${['Files','Edit','Select','Unfold','Symmetry','Constrain','Optimize','Pack','Tools','?'].map(m => `<a href="#">${m}</a>`).join('')}</nav>
  <div class="tool-row d-flex align-items-center">
    ${['load','loaduv','save'].map(bar).join('')}${sep}${['undo','redo'].map(bar).join('')}
    <div class="progress cut-meter flex-shrink-0" role="progressbar" aria-label="Progress"><div class="progress-bar w-100"></div></div>
    ${['cut','join'].map(bar).join('')}${sep}${['globeback','unfold','record','camera'].map(bar).join('')}${sep}${['pack','packadd','packask'].map(bar).join('')}<span class="bar-sep wide"></span>${['mirror','mirrorask'].map(bar).join('')}
  </div>
  <div class="work-area d-flex">
    ${sideTools('3D', [...shared, 'bulb', 'center', 'centerball'])}
    <div class="viewport"><svg viewBox="0 0 277 330" role="img" aria-label="3D view">${o.view3d}</svg></div>
    ${sideTools('UV', [...shared, 'center', 'centerball', 'swap', 'grid'])}
    <div class="viewport"><svg viewBox="0 0 277 330" role="img" aria-label="UV view">${o.viewUv}</svg></div>
    <div class="edit-tools flex-shrink-0 align-content-start">
      <div class="group-name">EDIT MODE</div>
      ${tool('arrow', o.rotating ? '' : 'hot')}${tool('move')}${tool('rotate', o.rotating ? 'hot' : '')}${tool('scale')}${tool('fix', 'second')}
      ${o.rotating ? `<button type="button" class="tool-btn">X</button><button type="button" class="tool-btn">Y</button><button type="button" class="tool-btn hot small-text">XY</button><button type="button" class="tool-btn small-text">45°</button>` : ''}
      <div class="group-name">SELECT</div>
      ${tool('dot')}${tool('edge', 'hot')}${tool('face')}${tool('island')}${tool('cross', 'second hot')}${tool('link')}${tool('path')}
      <div class="group-name">CONSTRAIN</div>
      ${tool('pin')}${tool('pinx', 'cold')}${tool('pinx', 'second hot')}${tool('hline')}${tool('vline')}${tool('axes', 'cold')}${tool('axes', 'hot')}
    </div>
  </div>
  <div class="panel-row d-flex">
    <fieldset class="group-box w-unfold"><legend>Unfold</legend><div class="stack d-flex flex-column align-items-center"><button type="button" class="big-btn hot" aria-label="Unfold">${icon('unfold')}</button>${spin('Unfold steps', 1)}</div></fieldset>
    <fieldset class="group-box w-optim"><legend>Optimization</legend><div class="optim-row d-flex ps-1">
      <div class="stack d-flex flex-column"><button type="button" class="big-btn" aria-label="Optimize">${icon('flag')}</button>${spin('Optimize steps', 2)}</div>
      <div class="pt-2">${scale('Optimization', [1,100,100], 100)}</div>
      <div class="mode-box d-flex align-self-start"><select class="mode-list" size="3" aria-label="Mode"><option selected>Surf</option><option>Angle</option><option>Relax</option></select>
      <div class="list-scroll d-flex flex-column justify-content-between"><button type="button" aria-label="Up">${icon('up')}</button><button type="button" aria-label="Down">${icon('down')}</button></div></div>
    </div></fieldset>
    <fieldset class="group-box w-cons"><legend>Constraints mode</legend><div class="pin-row d-flex flex-column">
      <label class="d-flex align-items-center"><input type="checkbox" class="pin-check">AutoPin</label>
      <div class="d-flex pt-1" style="gap:1px"><button type="button" class="big-btn" aria-label="Mode 1">${icon('gears')}</button><button type="button" class="big-btn" aria-label="Mode 2">${icon('gears')}</button><button type="button" class="big-btn hot" aria-label="Mode 3">${icon('gearsplus')}</button></div></div></fieldset>
    <fieldset class="group-box w-density"><legend>Density Map Brush</legend><div class="density-row d-flex align-items-start">
      <span class="dim beside">x2.00</span><div class="pt-1">${scale('Strength', null, 66, true)}</div>
      <span class="beside ms-2">P</span>${scale('P', [1,50,100], 50, true)}<span class="beside ms-2">S</span>${scale('S', [1,50,100], 50, true)}<button type="button" class="reset-btn mt-2" disabled>Reset</button></div></fieldset>
    <div class="w-tile ms-auto flex-shrink-0"><fieldset class="group-box"><legend>Texture Tile</legend><div class="px-2 pt-1">${scale('Texture Tile', o.tile, o.tileAt)}</div></fieldset><div>Island count : ${o.islands}</div></div>
  </div>
  <footer class="status-row d-flex align-items-center">${o.status.map(t => `<span>${t}</span>`).join('')}<svg class="ms-auto" width="9" height="9" viewBox="0 0 9 9" aria-hidden="true"><path d="M7 1h1M5 3h1M7 3h1M3 5h1M5 5h1M7 5h1M1 7h1M3 7h1M5 7h1M7 7h1" stroke="#a5a190" stroke-width="1.300"/></svg></footer>
  <svg class="notes" viewBox="0 0 641 464">${o.notes}</svg>`;
}
const note = (x, y, n, t) => `<text x="${x}" y="${y}"><tspan class="num">${n}.</tspan>${t}</text>`;
const arrow = d => `<path d="${d}" marker-end="url(#tip)"/>`;

const e1 = ellipsoid([121,171], [109,-23.5], [-15,34], [0,-43.5]);
const e3 = ellipsoid([122.5,181], [98.5,-20], [3.5,46], [0,-59]);

document.getElementById('win-cut').innerHTML = appWindow({
  rotating: false, tile: [1,50,100], tileAt: 50, islands: 1, status: [],
  view3d: meshBody(e1, 65) + `<path d="${e1.line(equator)}" fill="none" stroke="#1ee6ee" stroke-width="1.600"/>` + gizmo(18,312,29,316,6,315,['y','x','z']),
  viewUv: `<path d="M86.500 0v203M86 202.500h191" stroke="#7c7c7c"/><path d="M188.500 79v41M168 99.500h41" stroke="#777"/>` + endOnBody(138.5,163,66,49) + `<path d="M73 163h131" stroke="#1ee6ee" stroke-width="2"/>` + gizmo(18,311,34,311,18,311,['v','u','w']),
  notes: note(352,31,5,'展开') + note(218,118,4,'砍') + note(249,168,3,'选择线') + note(546,136,1,'线层级') + note(535,252,2,'线延伸')
    + arrow('M335 24L300 35') + arrow('M231 97L225 52') + arrow('M273 171L255 207') + arrow('M567 137L636 152') + arrow('M584 248L628 237')
    + '<path d="M259 187q8-6 13-4 2 4-12 9l11-5-12 1 6-2"/>'
});
document.getElementById('win-map').innerHTML = appWindow({
  rotating: true, tile: [1,1,100], tileAt: 0, islands: 2, status: ['Task Name : Reset 3D View','Options :','Status : Finished'],
  view3d: texturedBody(e3) + gizmo(18,312,33,314,14,315,['y','x','']),
  viewUv: `<path d="M16.500 37.500h252v252h-252zM142.500 164v10" fill="none" stroke="#777"/>` + uvIsland(168.5,102,93,57,-20) + uvIsland(107.5,222,92,58,23) + gizmo(18,311,34,311,18,311,['v','u','w']),
  notes: '<text x="101" y="102"><tspan class="num">2.FIles/load User Texture</tspan></text>' + note(80,162,1,'贴图显示模式') + note(480,377,3,'调节贴图的密度')
    + arrow('M90 91L13 24') + arrow('M75 163L20 184') + arrow('M533 377L573 410')
});
</script>
<script src="https://cdn.jsdelivr.net/npm/bootstrap@5.3.0/dist/js/bootstrap.bundle.min.js"></script>
</body>
</html>
